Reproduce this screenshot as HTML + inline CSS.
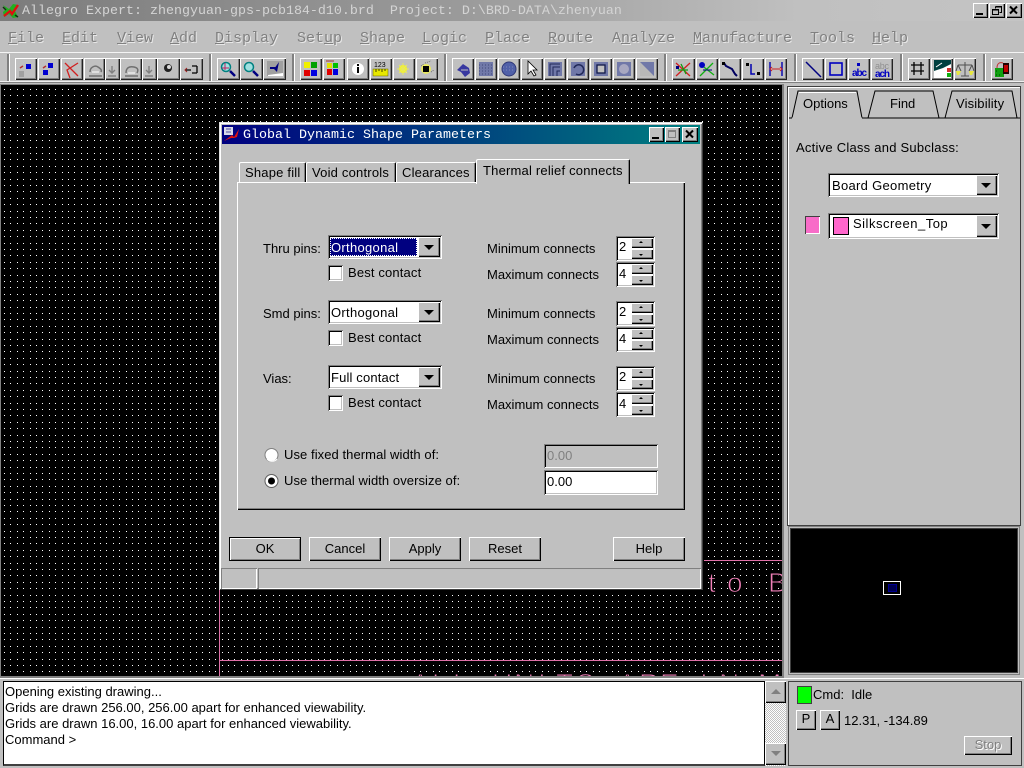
<!DOCTYPE html>
<html><head><meta charset="utf-8"><title>Allegro Expert</title>
<style>
html,body{margin:0;padding:0;background:#c0c0c0}
body{width:1024px;height:768px;position:relative;overflow:hidden;font:13px/16px "Liberation Sans",sans-serif;color:#000}
div,span.x,svg{position:absolute}
.x{position:absolute;white-space:nowrap;line-height:16px;height:16px}
.m{font-family:"Liberation Mono",monospace}
.mn{position:absolute;top:30px;font:15px/18px "Liberation Mono",monospace;color:#808080;text-shadow:1px 1px 0 #e8e8e8;white-space:nowrap}
.r{background:#c0c0c0;box-shadow:inset 1px 1px #fff,inset -1px -1px #000,inset -2px -2px #808080}
.t{top:58px;height:22px;background:#c0c0c0;box-shadow:inset 1px 1px #fff,inset -1px -1px #222,inset -2px -2px #808080}
.s{background:#fff;box-shadow:inset 1px 1px #808080,inset -1px -1px #fff,inset 2px 2px #000,inset -2px -2px #c0c0c0}
.sep{top:54px;width:2px;height:27px;background:#808080;border-right:1px solid #fff}
.btn{top:537px;height:24px;line-height:23px;text-align:center;background:#c0c0c0;box-shadow:inset 1px 1px #fff,inset -1px -1px #000,inset -2px -2px #808080}
.tab{background:#c0c0c0;border-top:1px solid #fff;border-left:1px solid #fff;border-right:1px solid #000;box-shadow:inset -1px 0 #808080;border-radius:2px 2px 0 0;text-align:left;padding-left:5px;white-space:nowrap;box-sizing:border-box;letter-spacing:.2px}
.tri{width:0;height:0;border-left:5px solid transparent;border-right:5px solid transparent;border-top:5px solid #000}
.up{width:0;height:0;border-left:2px solid transparent;border-right:2px solid transparent;border-bottom:2px solid #000}
.dn{width:0;height:0;border-left:2px solid transparent;border-right:2px solid transparent;border-top:2px solid #000}
</style></head><body>

<!-- title bar -->
<div style="left:0;top:0;width:1024px;height:21px;background:linear-gradient(90deg,#7c7c7c 0,#9a9a9a 45%,#c0c0c0 78%,#c4c4c4 100%)"></div>
<svg style="left:2px;top:2px" width="18" height="18" viewBox="0 0 18 18"><path d="M1 3l6 4 4-5 5 1-3 6 3 6-5 1-4-4-5 3-1-5 3-3z" fill="#20b020"/><path d="M2 14L8 9l2 3 6-9" stroke="#e01010" stroke-width="2.4" fill="none"/><path d="M1 5l3 3M13 13l3 2" stroke="#103010" stroke-width="1.5"/></svg>
<span class="x m" style="left:22px;top:4px;font-size:13.33px;color:#d4d4d4;white-space:pre">Allegro Expert: zhengyuan-gps-pcb184-d10.brd  Project: D:\BRD-DATA\zhenyuan</span>
<div class="r" style="left:973px;top:3px;width:15px;height:15px"></div>
<div style="left:976px;top:13px;width:7px;height:2px;background:#000"></div>
<div class="r" style="left:989px;top:3px;width:16px;height:15px"></div>
<svg style="left:989px;top:3px" width="16" height="15"><path d="M6.5 3.5h6v6h-2M6.5 3.5v2M3.5 6.500h6v5h-6z" fill="none" stroke="#000"/><path d="M6 4h7M3 7h7" stroke="#000"/></svg>
<div class="r" style="left:1006px;top:3px;width:16px;height:15px"></div>
<svg style="left:1006px;top:3px" width="16" height="15"><path d="M4 3.500l7 7M11 3.500l-7 7" stroke="#000" stroke-width="2"/></svg>

<!-- menu -->
<span class="mn" style="left:8px"><u>F</u>ile</span>
<span class="mn" style="left:62px"><u>E</u>dit</span>
<span class="mn" style="left:117px"><u>V</u>iew</span>
<span class="mn" style="left:170px"><u>A</u>dd</span>
<span class="mn" style="left:215px"><u>D</u>isplay</span>
<span class="mn" style="left:297px">Set<u>u</u>p</span>
<span class="mn" style="left:360px"><u>S</u>hape</span>
<span class="mn" style="left:422px"><u>L</u>ogic</span>
<span class="mn" style="left:485px"><u>P</u>lace</span>
<span class="mn" style="left:548px"><u>R</u>oute</span>
<span class="mn" style="left:612px">A<u>n</u>alyze</span>
<span class="mn" style="left:693px"><u>M</u>anufacture</span>
<span class="mn" style="left:810px"><u>T</u>ools</span>
<span class="mn" style="left:872px"><u>H</u>elp</span>

<!-- toolbar -->
<div style="left:0;top:52px;width:1024px;height:1px;background:#f4f4f4"></div>
<div style="left:0;top:81px;width:1024px;height:1px;background:#f0f0f0"></div>
<div style="left:0;top:82px;width:1024px;height:1px;background:#808080"></div>
<div class="sep" style="left:7px"></div><div class="sep" style="left:209px"></div><div class="sep" style="left:292px"></div><div class="sep" style="left:444px"></div><div class="sep" style="left:664px"></div><div class="sep" style="left:794px"></div><div class="sep" style="left:900px"></div><div class="sep" style="left:983px"></div>

<div class="t" style="left:15px;width:22px"></div><div class="t" style="left:38px;width:22px"></div><div class="t" style="left:61px;width:22px"></div><div class="t" style="left:84px;width:21px"></div><div class="t" style="left:105px;width:15px"></div><div class="t" style="left:120px;width:22px"></div><div class="t" style="left:142px;width:15px"></div><div class="t" style="left:157px;width:23px"></div><div class="t" style="left:180px;width:23px"></div>
<div class="t" style="left:217px;width:23px"></div><div class="t" style="left:240px;width:23px"></div><div class="t" style="left:263px;width:23px"></div>
<div class="t" style="left:300px;width:22px"></div><div class="t" style="left:323px;width:22px"></div><div class="t" style="left:347px;width:22px"></div><div class="t" style="left:370px;width:22px"></div><div class="t" style="left:393px;width:22px"></div><div class="t" style="left:416px;width:22px"></div>
<div class="t" style="left:452px;width:22px"></div><div class="t" style="left:475px;width:22px"></div><div class="t" style="left:498px;width:22px"></div><div class="t" style="left:521px;width:22px"></div><div class="t" style="left:544px;width:22px"></div><div class="t" style="left:567px;width:22px"></div><div class="t" style="left:590px;width:22px"></div><div class="t" style="left:613px;width:22px"></div><div class="t" style="left:636px;width:22px"></div>
<div class="t" style="left:672px;width:23px"></div><div class="t" style="left:696px;width:22px"></div><div class="t" style="left:719px;width:22px"></div><div class="t" style="left:742px;width:22px"></div><div class="t" style="left:765px;width:22px"></div>
<div class="t" style="left:802px;width:22px"></div><div class="t" style="left:825px;width:22px"></div><div class="t" style="left:848px;width:22px"></div><div class="t" style="left:871px;width:22px"></div>
<div class="t" style="left:908px;width:22px"></div><div class="t" style="left:931px;width:22px"></div><div class="t" style="left:954px;width:22px"></div>
<div class="t" style="left:991px;width:22px"></div>

<svg style="left:0;top:50px" width="1024" height="35" viewBox="0 50 1024 35">
<!-- group 1 -->
<rect x="26" y="64" width="5" height="5" fill="#0000d0"/><path d="M19 71h5v6h-5z" fill="#a0a0a0"/><path d="M20 68l3-2" stroke="#b03030" stroke-width="1.500"/>
<rect x="48" y="63" width="5" height="5" fill="#0000d0"/><rect x="43" y="70" width="5" height="5" fill="#0000d0"/><path d="M43 68l3-2" stroke="#b03030" stroke-width="1.500"/>
<path d="M65 63l13 13M78 63L67 70l3 8" stroke="#d02020" stroke-width="1.300" fill="none"/>
<path d="M90 72c0-5 5-7 8-5s4 3 3 5M89 76h13" stroke="#707070" fill="none" stroke-width="1.500"/><path d="M92 72h7" stroke="#fff"/>
<path d="M112 66v6M109 70l3 3 3-3M108 76h8" stroke="#808080" fill="none" stroke-width="1.400"/>
<path d="M126 73c0-5 3-7 8-6s4 4 3 6M125 76h13" stroke="#707070" fill="none" stroke-width="1.500"/><path d="M128 73h7" stroke="#fff"/>
<path d="M149 66v6M146 70l3 3 3-3M145 76h8" stroke="#808080" fill="none" stroke-width="1.400"/>
<circle cx="168" cy="68" r="4" fill="#202020"/><circle cx="169" cy="67" r="2" fill="#d8d8d8"/>
<path d="M185 70h6M192 66h5M192 73h5M197 66v7" stroke="#000" stroke-width="1.300" fill="none"/><path d="M187 68l-2 2 2 2" stroke="#a02020" fill="none"/>
<!-- zoom -->
<circle cx="226" cy="67" r="4.500" fill="#9fe0e0" stroke="#008080" stroke-width="1.500"/><path d="M230 71l5 5" stroke="#000080" stroke-width="2.500"/><path d="M222 68h7M225 63v7" stroke="#c02060"/>
<circle cx="249" cy="67" r="4.500" fill="#9fe0e0" stroke="#008080" stroke-width="1.500"/><path d="M253 71l5 5" stroke="#000080" stroke-width="2.500"/>
<rect x="267" y="61" width="16" height="15" fill="#a0a0a0"/><path d="M268 75l15-2v3h-15z" fill="#fff"/><path d="M279 62l-5 7 3 3z" fill="#000080"/><path d="M270 68h7" stroke="#000080" stroke-width="2"/>
<!-- colour -->
<rect x="304" y="62" width="6" height="6" fill="#f0f000"/><rect x="311" y="62" width="6" height="6" fill="#00a000"/><rect x="304" y="70" width="6" height="6" fill="#e00000"/><rect x="311" y="70" width="6" height="6" fill="#0000e0"/>
<rect x="327" y="63" width="5" height="5" fill="#e0e000"/><rect x="333" y="63" width="5" height="5" fill="#00c000"/><rect x="327" y="69" width="5" height="6" fill="#e00000"/><rect x="333" y="69" width="5" height="6" fill="#0000e0"/><path d="M326 61h8" stroke="#a03030"/>
<circle cx="358" cy="69" r="6" fill="#fff"/><rect x="357" y="67" width="2" height="6" fill="#000"/><rect x="357" y="64" width="2" height="2" fill="#000"/>
<rect x="373" y="69" width="15" height="7" fill="#e8e800" stroke="#606000" stroke-width=".5"/><path d="M376 69v3M379 69v2M382 69v3M385 69v2" stroke="#404000"/>
<text x="374" y="67" font-family="Liberation Sans" font-size="7" fill="#000">123</text>
<circle cx="403" cy="69" r="4" fill="#f4f420"/><path d="M403 63v12M397 69h12M399 65l8 8M407 65l-8 8" stroke="#e8e860"/>
<path d="M425 63l6-2M421 66l3-2M431 72l3-2" stroke="#707070" stroke-dasharray="1 1"/><circle cx="426" cy="69" r="5" fill="#e8e860"/><rect x="423" y="66" width="6" height="6" fill="#000"/>
<!-- shapes -->
<path d="M457 70l6-6 6 4 1 5-5 4-4-5z" fill="#3838a0"/><path d="M461 70h7" stroke="#c0c0c0"/>
<rect x="479" y="62" width="14" height="14" fill="#7078a8"/><path d="M479 65h14M479 68h14M479 71h14M479 74h14" stroke="#404878" stroke-dasharray="1 2"/>
<circle cx="509" cy="69" r="7" fill="#5060a8" stroke="#303878"/><path d="M503 67h12M503 70h12" stroke="#8088b8" stroke-dasharray="1 2"/>
<path d="M528 61v13l3-3 3 5 2-1-3-5h4z" fill="#fff" stroke="#000" stroke-width=".8"/>
<rect x="548" y="62" width="14" height="14" fill="#7078a8"/><path d="M550 76v-12h10M553 76v-9h7M557 76v-5h3" stroke="#202858" fill="none"/>
<rect x="571" y="62" width="14" height="14" fill="#7078a8"/><path d="M574 68a5 5 0 1 1 2 6" stroke="#202858" stroke-width="1.500" fill="none"/>
<rect x="594" y="62" width="14" height="14" fill="#7078a8"/><rect x="597" y="65" width="8" height="8" fill="#c0c0c0" stroke="#101848" stroke-width="1.300"/>
<rect x="617" y="62" width="14" height="14" fill="#7078a8"/><circle cx="624" cy="69" r="5" fill="#a8a8c0"/>
<rect x="640" y="62" width="14" height="14" fill="#7078a8"/><path d="M640 62l14 14h-14z" fill="#b8b8b8"/>
<!-- route -->
<path d="M676 63l14 13M690 63l-14 13" stroke="#d02020" stroke-width="1.300"/><path d="M678 70h10M681 64l5 10" stroke="#10a010" stroke-width="1.300"/><rect x="676" y="66" width="3" height="3" fill="#000080"/>
<path d="M700 64l14 11M713 63l-13 13" stroke="#10b010" stroke-width="1.300"/><circle cx="702" cy="65" r="3" fill="#0000c0"/><path d="M703 70h9" stroke="#000080"/>
<path d="M724 63l2 3 6 3 3 5 2 2" stroke="#000060" stroke-width="2" fill="none"/><rect x="722" y="62" width="3" height="3" fill="#000"/>
<rect x="746" y="63" width="3" height="3" fill="#000"/><rect x="757" y="72" width="3" height="3" fill="#000"/><path d="M751 64v10h4" stroke="#0000b0" stroke-width="1.500" fill="none"/>
<path d="M770 62v14M782 62v14" stroke="#0000b0" stroke-width="1.400"/><path d="M772 69h8M772 67l-2 2 2 2M780 67l2 2-2 2" stroke="#d02020" fill="none"/>
<!-- draw -->
<path d="M806 62l15 15" stroke="#000080" stroke-width="1.500"/>
<rect x="830" y="63" width="12" height="12" fill="none" stroke="#0000c0" stroke-width="1.600"/>
<text x="852" y="76" font-family="Liberation Sans" font-size="10" font-weight="bold" fill="#0000c0" textLength="15">abc</text><rect x="857" y="63" width="3" height="3" fill="#0000c0"/>
<text x="875" y="69" font-family="Liberation Sans" font-size="9" fill="#909090" textLength="14">abc</text><text x="875" y="77" font-family="Liberation Sans" font-size="10" font-weight="bold" fill="#0000c0" textLength="15">ach</text>
<!-- grid etc -->
<path d="M911 65h13M911 71h13M914 62v13M921 62v13" stroke="#000" stroke-width="1.300"/>
<rect x="934" y="60" width="17" height="18" fill="#fff"/><path d="M934 60h17v4l-8 4-9 3z" fill="#004040"/><path d="M936 67l6-4" stroke="#fff"/><rect x="947" y="68" width="4" height="4" fill="#d03030"/><rect x="947" y="73" width="4" height="4" fill="#10b010"/>
<path d="M965 62v14M958 65h14M958 65l-2 6M958 65l3 6M972 65l-3 6M972 65l2 6M961 76h8" stroke="#505050" fill="none"/><path d="M956 71h5l-2 4h-2zM969 71h5l-2 4h-2z" fill="#e8e840"/>
<rect x="995" y="68" width="9" height="9" fill="#10a010"/><rect x="1003" y="63" width="6" height="11" fill="#200000"/><rect x="1004" y="65" width="4" height="7" fill="#c00000"/><path d="M997 68c0-5 3-6 6-5" stroke="#c03030" fill="none"/><path d="M996 75h1M999 75h1M996 71h1" stroke="#004000"/>
</svg>

<!-- canvas -->
<div style="left:0;top:84px;width:784px;height:594px;background:#808080"></div>
<svg style="left:1px;top:85px" width="781" height="591">
<defs><pattern id="g" x="3" y="4" width="32" height="32" patternUnits="userSpaceOnUse"><path d="M0 .5h1m5 0h1m6 0h1m5 0h1m6 0h1M0 6.500h1m5 0h1m6 0h1m5 0h1m6 0h1M0 13.500h1m5 0h1m6 0h1m5 0h1m6 0h1M0 19.500h1m5 0h1m6 0h1m5 0h1m6 0h1M0 26.500h1m5 0h1m6 0h1m5 0h1m6 0h1" stroke="#fff" stroke-width="1" fill="none" shape-rendering="crispEdges"/></pattern></defs>
<rect width="781" height="591" fill="#000"/><rect width="781" height="591" fill="url(#g)"/>
<path d="M218.500 505V591M218 575.500H781M703 475.500H781" stroke="#e070a8" fill="none" shape-rendering="crispEdges"/>
<g fill="#f080b8" stroke="#000" stroke-width="1" font-family="Liberation Sans" font-size="28">
<text x="707 726 750 767" y="507">to B</text>
<text x="410 431 452 474 491 513 537 555 575 597 617 638 659 680 699 718 740 757" y="608" style="white-space:pre">ALL UNITS ARE IN M</text>
</g>
</svg>

<!-- dialog -->
<div style="left:219px;top:122px;width:484px;height:468px;background:#c0c0c0;box-shadow:inset 1px 1px #dfdfdf,inset -1px -1px #404040,inset 2px 2px #fff,inset -2px -2px #808080"></div>
<div style="left:222px;top:125px;width:478px;height:19px;background:linear-gradient(90deg,#000080 0,#00347e 40%,#008080 100%)"></div>
<svg style="left:224px;top:127px" width="16" height="15"><rect x="0" y="0" width="9" height="8" fill="#d8d8e8"/><path d="M2 2h5M2 5h5" stroke="#5050a0"/><path d="M0 14L8 8l2 2 5-8-2 8-3 1-3 0z" fill="#e01010"/></svg>
<span class="x m" style="left:243px;top:128px;font-size:13.33px;color:#fff">Global Dynamic Shape Parameters</span>
<div class="r" style="left:649px;top:127px;width:15px;height:15px"></div><div style="left:652px;top:137px;width:7px;height:2px;background:#000"></div>
<div class="r" style="left:665px;top:127px;width:15px;height:15px"></div><div style="left:668px;top:130px;width:8px;height:8px;border:1px solid #808080;border-top-width:2px;box-sizing:border-box"></div>
<div class="r" style="left:682px;top:127px;width:16px;height:15px"></div>
<svg style="left:682px;top:127px" width="16" height="15"><path d="M4 3.500l7 7M11 3.500l-7 7" stroke="#000" stroke-width="2"/></svg>

<!-- tab panel -->
<div style="left:237px;top:182px;width:448px;height:328px;box-shadow:inset 1px 1px #fff,inset -1px -1px #000,inset -2px -2px #808080"></div>
<div class="tab" style="left:239px;top:162px;width:67px;height:20px;line-height:20px">Shape fill</div>
<div class="tab" style="left:306px;top:162px;width:90px;height:20px;line-height:20px">Void controls</div>
<div class="tab" style="left:396px;top:162px;width:80px;height:20px;line-height:20px">Clearances</div>
<div class="tab" style="left:476px;top:159px;width:154px;height:25px;line-height:22px;padding-left:6px">Thermal relief connects</div>

<!-- rows -->
<span class="x" style="left:263px;top:241px">Thru pins:</span>
<div class="s" style="left:328px;top:235px;width:114px;height:24px"></div>
<div style="left:330px;top:238px;width:87px;height:18px;background:#000080;outline:1px dotted #fff;outline-offset:-1px"></div>
<span class="x" style="left:331px;top:240px;color:#fff;letter-spacing:.3px">Orthogonal</span>
<div class="r" style="left:418px;top:237px;width:22px;height:20px"></div><div class="tri" style="left:424px;top:245px"></div>
<div class="s" style="left:328px;top:265px;width:15px;height:16px"></div>
<span class="x" style="left:348px;top:265px;letter-spacing:.15px">Best contact</span>

<span class="x" style="left:263px;top:306px">Smd pins:</span>
<div class="s" style="left:328px;top:300px;width:114px;height:24px"></div>
<span class="x" style="left:331px;top:305px;letter-spacing:.3px">Orthogonal</span>
<div class="r" style="left:418px;top:302px;width:22px;height:20px"></div><div class="tri" style="left:424px;top:310px"></div>
<div class="s" style="left:328px;top:330px;width:15px;height:16px"></div>
<span class="x" style="left:348px;top:330px;letter-spacing:.15px">Best contact</span>

<span class="x" style="left:263px;top:371px">Vias:</span>
<div class="s" style="left:328px;top:365px;width:114px;height:24px"></div>
<span class="x" style="left:331px;top:370px;letter-spacing:.15px">Full contact</span>
<div class="r" style="left:418px;top:367px;width:22px;height:20px"></div><div class="tri" style="left:424px;top:375px"></div>
<div class="s" style="left:328px;top:395px;width:15px;height:16px"></div>
<span class="x" style="left:348px;top:395px;letter-spacing:.15px">Best contact</span>

<!-- spins thru -->
<span class="x" style="left:487px;top:241px">Minimum connects</span>
<span class="x" style="left:487px;top:267px">Maximum connects</span>
<span class="x" style="left:487px;top:306px">Minimum connects</span>
<span class="x" style="left:487px;top:332px">Maximum connects</span>
<span class="x" style="left:487px;top:371px">Minimum connects</span>
<span class="x" style="left:487px;top:397px">Maximum connects</span>

<div class="s" style="left:616px;top:236px;width:39px;height:25px"></div><div class="s" style="left:616px;top:262px;width:39px;height:25px"></div>
<div class="s" style="left:616px;top:301px;width:39px;height:25px"></div><div class="s" style="left:616px;top:327px;width:39px;height:25px"></div>
<div class="s" style="left:616px;top:366px;width:39px;height:25px"></div><div class="s" style="left:616px;top:392px;width:39px;height:25px"></div>

<div class="r" style="left:631px;top:238px;width:22px;height:10px"></div><div class="r" style="left:631px;top:249px;width:22px;height:10px"></div><div class="r" style="left:631px;top:264px;width:22px;height:10px"></div><div class="r" style="left:631px;top:275px;width:22px;height:10px"></div>
<div class="r" style="left:631px;top:303px;width:22px;height:10px"></div><div class="r" style="left:631px;top:314px;width:22px;height:10px"></div><div class="r" style="left:631px;top:329px;width:22px;height:10px"></div><div class="r" style="left:631px;top:340px;width:22px;height:10px"></div>
<div class="r" style="left:631px;top:368px;width:22px;height:10px"></div><div class="r" style="left:631px;top:379px;width:22px;height:10px"></div><div class="r" style="left:631px;top:394px;width:22px;height:10px"></div><div class="r" style="left:631px;top:405px;width:22px;height:10px"></div>
<div class="up" style="left:639px;top:241px"></div><div class="dn" style="left:639px;top:254px"></div><div class="up" style="left:639px;top:267px"></div><div class="dn" style="left:639px;top:280px"></div>
<div class="up" style="left:639px;top:306px"></div><div class="dn" style="left:639px;top:319px"></div><div class="up" style="left:639px;top:332px"></div><div class="dn" style="left:639px;top:345px"></div>
<div class="up" style="left:639px;top:371px"></div><div class="dn" style="left:639px;top:384px"></div><div class="up" style="left:639px;top:397px"></div><div class="dn" style="left:639px;top:410px"></div>
<span class="x" style="left:619px;top:239px">2</span><span class="x" style="left:619px;top:266px">4</span>
<span class="x" style="left:619px;top:304px">2</span><span class="x" style="left:619px;top:331px">4</span>
<span class="x" style="left:619px;top:369px">2</span><span class="x" style="left:619px;top:396px">4</span>

<!-- radios -->
<svg style="left:264px;top:447px" width="16" height="42"><g><circle cx="7.500" cy="8" r="6.500" fill="#fff" stroke="#808080"/><path d="M3 12a6.500 6.500 0 0 0 10 0" stroke="#fff" fill="none"/></g><g transform="translate(0,26)"><circle cx="7.500" cy="8" r="6.500" fill="#fff" stroke="#606060"/><circle cx="7.500" cy="8" r="3.500" fill="#000"/></g></svg>
<span class="x" style="left:284px;top:447px;letter-spacing:.07px">Use fixed thermal width of:</span>
<span class="x" style="left:284px;top:473px;letter-spacing:.07px">Use thermal width oversize of:</span>
<div class="s" style="left:544px;top:444px;width:114px;height:24px;background:#c0c0c0"></div>
<span class="x" style="left:547px;top:448px;color:#808080">0.00</span>
<div class="s" style="left:544px;top:470px;width:114px;height:25px"></div>
<span class="x" style="left:547px;top:474px">0.00</span>

<!-- buttons -->
<div class="btn" style="left:229px;width:72px;box-shadow:inset 0 0 0 1px #000,inset 2px 2px #fff,inset -2px -2px #808080">OK</div>
<div class="btn" style="left:309px;width:72px">Cancel</div>
<div class="btn" style="left:389px;width:72px">Apply</div>
<div class="btn" style="left:469px;width:72px">Reset</div>
<div class="btn" style="left:613px;width:72px">Help</div>

<!-- dialog status -->
<div style="left:221px;top:568px;width:36px;height:21px;box-shadow:inset 1px 1px #808080,inset -1px -1px #fff"></div>
<div style="left:258px;top:568px;width:443px;height:21px;box-shadow:inset 1px 1px #808080,inset -1px -1px #fff"></div>

<!-- right panel -->
<div style="left:787px;top:86px;width:234px;height:440px;box-shadow:inset 0 0 0 1px #404040,inset 2px 2px #fff"></div>
<svg style="left:787px;top:88px" width="234" height="34" viewBox="787 88 234 34">
<path d="M789 118H792L798 91H857L862 118H868L875 91H933L939 118H945L952 91H1012L1017 118H1020" fill="none" stroke="#000"/>
<path d="M862 118H1020" stroke="#000"/><path d="M792 118.500H862" stroke="#c0c0c0" stroke-width="2"/>
<path d="M799 92.500H856" stroke="#fff"/>
</svg>
<span class="x" style="left:803px;top:96px">Options</span>
<span class="x" style="left:890px;top:96px">Find</span>
<span class="x" style="left:956px;top:96px;letter-spacing:.15px">Visibility</span>
<span class="x" style="left:796px;top:140px;letter-spacing:.24px">Active Class and Subclass:</span>
<div class="s" style="left:828px;top:173px;width:171px;height:24px"></div>
<span class="x" style="left:832px;top:178px;letter-spacing:.3px">Board Geometry</span>
<div class="r" style="left:976px;top:175px;width:21px;height:20px"></div><div class="tri" style="left:981px;top:183px"></div>
<div style="left:805px;top:216px;width:15px;height:18px;background:#f86cc8;box-shadow:inset 1px 1px #404040,inset -1px -1px #fff;box-sizing:border-box"></div>
<div class="s" style="left:828px;top:213px;width:171px;height:26px"></div>
<div style="left:833px;top:217px;width:16px;height:18px;background:#ff66cc;border:1px solid #000;box-sizing:border-box"></div>
<span class="x" style="left:853px;top:216px;letter-spacing:.5px">Silkscreen_Top</span>
<div class="r" style="left:976px;top:215px;width:21px;height:22px"></div><div class="tri" style="left:981px;top:224px"></div>

<!-- minimap -->
<div style="left:788px;top:526px;width:232px;height:149px;background:#000;box-shadow:inset 0 0 0 1px #808080,inset 0 0 0 2px #c0c0c0,inset 0 0 0 3px #404040"></div>
<div style="left:883px;top:581px;width:18px;height:14px;border:1px solid #fff;box-sizing:border-box"></div>
<div style="left:888px;top:584px;width:9px;height:8px;border:1px solid #000090;background:#000050;box-sizing:border-box"></div>

<!-- output -->
<div style="left:0;top:678px;width:1024px;height:90px;background:#c0c0c0;border-top:1px solid #fff;box-sizing:border-box"></div>
<div style="left:3px;top:681px;width:762px;height:85px;background:#fff;box-sizing:border-box;border:1px solid #000;border-bottom:2px solid #404040"></div>
<span class="x" style="left:5px;top:684px">Opening existing drawing...</span>
<span class="x" style="left:5px;top:700px">Grids are drawn 256.00, 256.00 apart for enhanced viewability.</span>
<span class="x" style="left:5px;top:716px">Grids are drawn 16.00, 16.00 apart for enhanced viewability.</span>
<span class="x" style="left:5px;top:732px">Command &gt;</span>
<svg style="left:765px;top:681px" width="21" height="85"><defs><pattern id="d" width="2" height="2" patternUnits="userSpaceOnUse"><rect width="2" height="2" fill="#fff"/><rect width="1" height="1" fill="#c0c0c0"/><rect x="1" y="1" width="1" height="1" fill="#c0c0c0"/></pattern></defs><rect width="21" height="85" fill="url(#d)"/></svg>
<div class="r" style="left:765px;top:681px;width:21px;height:22px"></div><div style="left:771px;top:689px;width:0;height:0;border-left:5px solid transparent;border-right:5px solid transparent;border-bottom:5px solid #808080"></div>
<div class="r" style="left:765px;top:743px;width:21px;height:22px"></div><div style="left:771px;top:751px;width:0;height:0;border-left:5px solid transparent;border-right:5px solid transparent;border-top:5px solid #808080"></div>

<!-- status -->
<div style="left:788px;top:681px;width:234px;height:85px;box-shadow:inset 1px 1px #404040,inset -1px -1px #404040"></div>
<div style="left:797px;top:686px;width:15px;height:18px;background:#00ff00;border:1px solid #404040;box-sizing:border-box"></div>
<span class="x" style="left:813px;top:687px;white-space:pre">Cmd:  Idle</span>
<div class="r" style="left:796px;top:710px;width:20px;height:20px;line-height:18px;text-align:center">P</div>
<div class="r" style="left:820px;top:710px;width:20px;height:20px;line-height:18px;text-align:center">A</div>
<span class="x" style="left:844px;top:713px">12.31, -134.89</span>
<div class="r" style="left:964px;top:736px;width:48px;height:19px;line-height:18px;text-align:center;color:#808080;text-shadow:1px 1px #fff">Stop</div>

</body></html>
